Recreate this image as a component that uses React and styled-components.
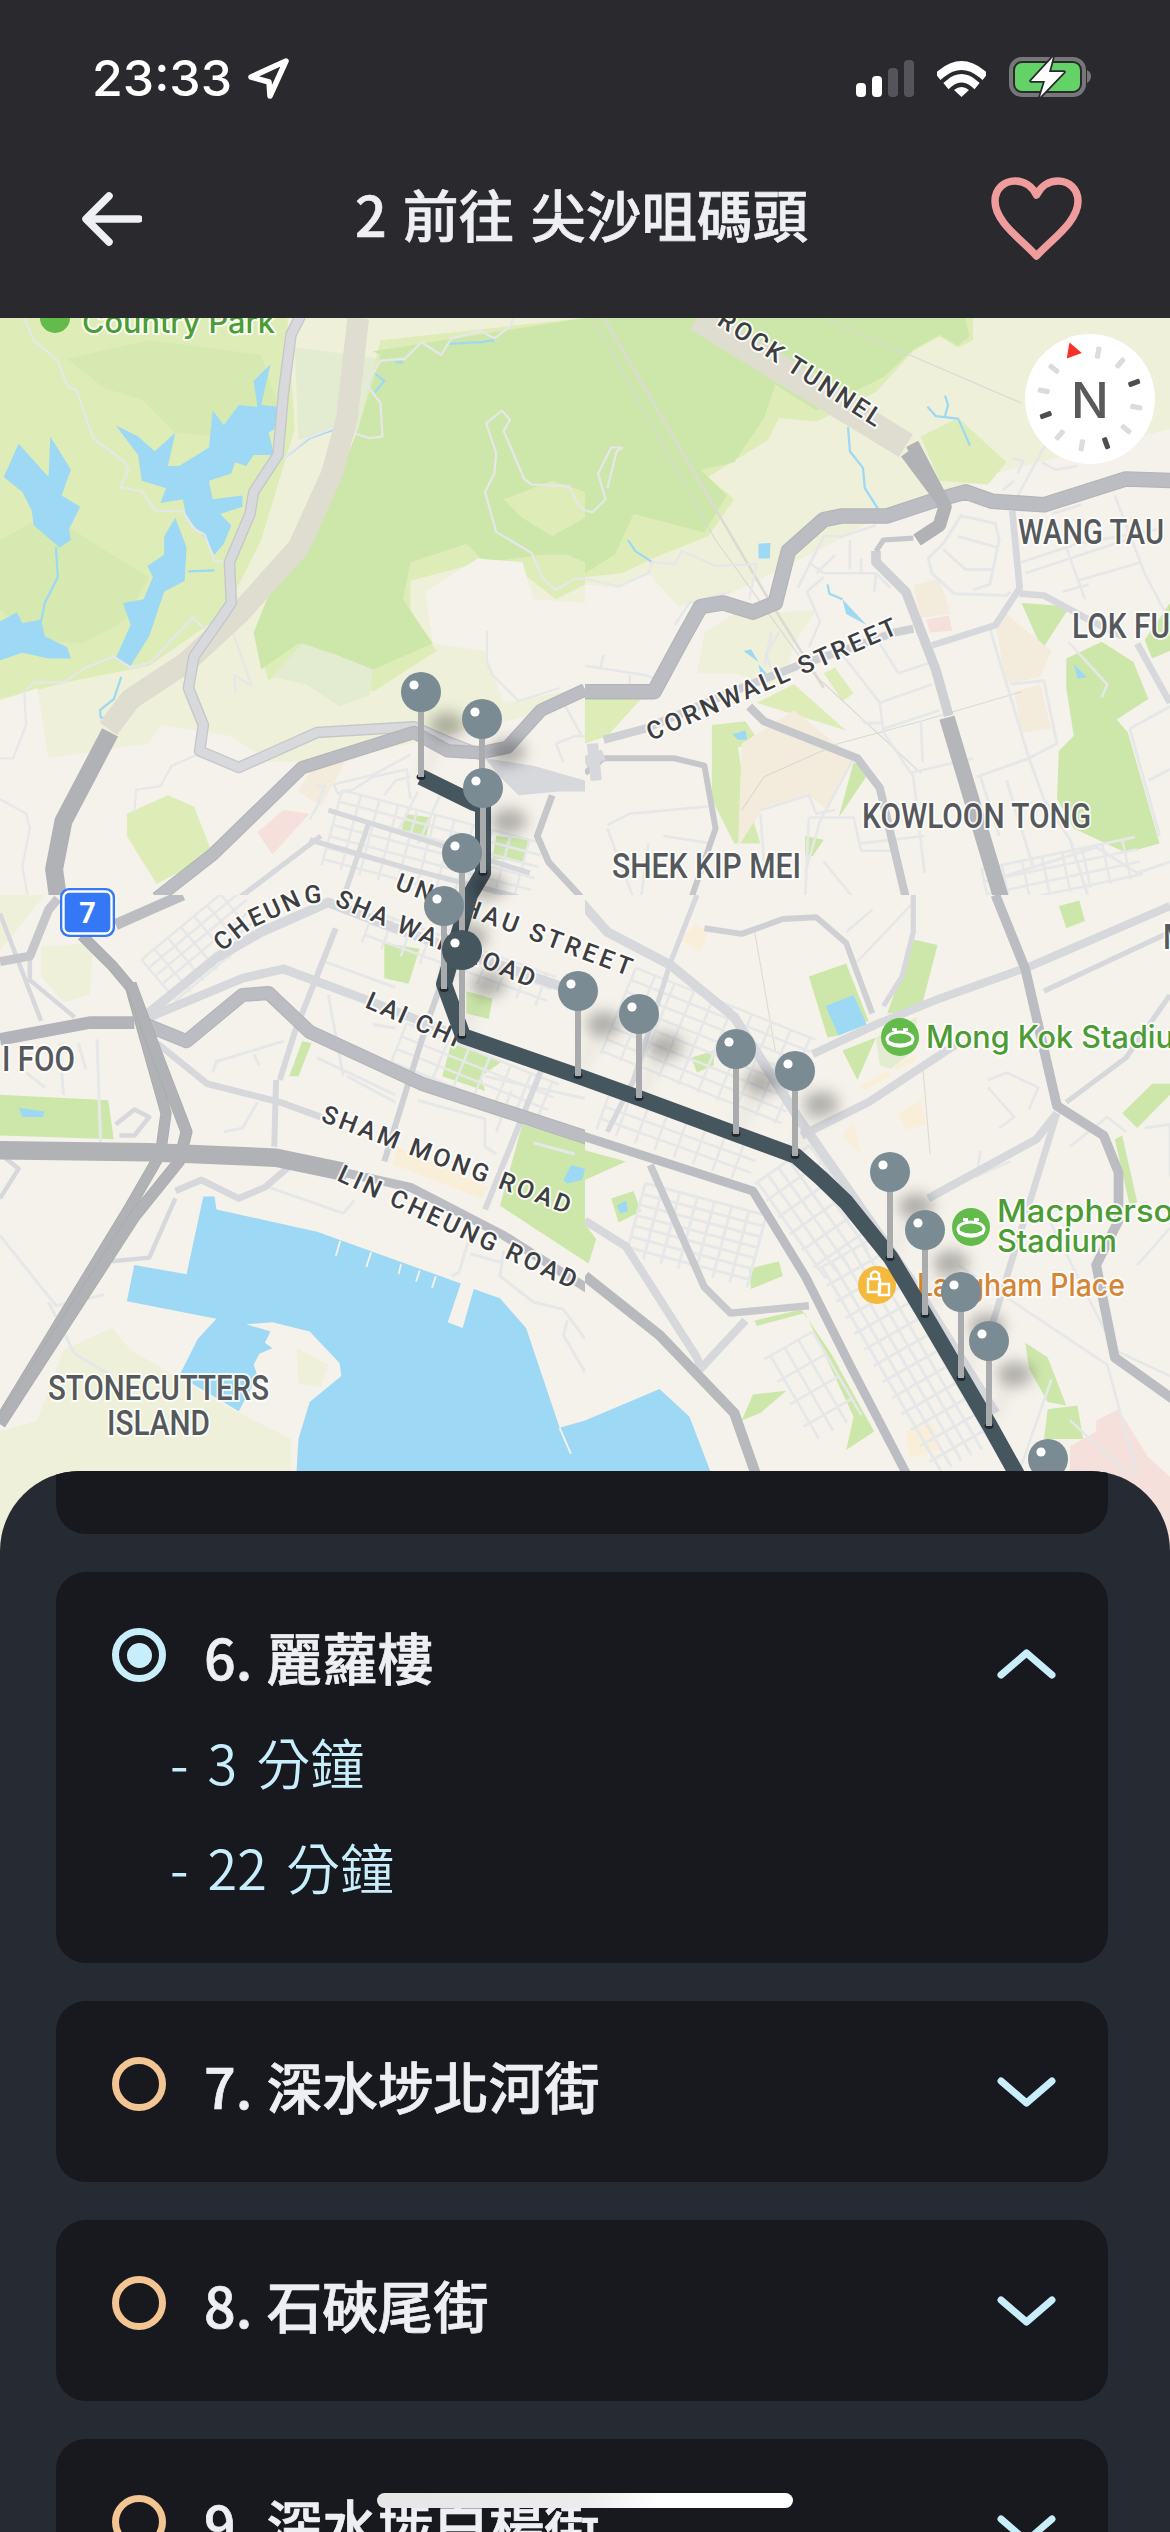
import React from 'react';
import styled, { createGlobalStyle } from 'styled-components';

const GlobalStyle = createGlobalStyle`
  html, body { margin: 0; padding: 0; background: #29292e; }
`;

const cjk = `'Noto Sans CJK TC', 'Noto Sans', sans-serif`;

const Screen = styled.div`
  position: relative;
  display: flex;
  flex-direction: column;
  width: 1170px;
  height: 2532px;
  overflow: hidden;
  background: #262a33;
  font-family: ${cjk};
`;

const Header = styled.header`
  height: 318px;
  flex: none;
  background: #29292e;
`;

const StatusBar = styled.div`
  height: 156px;
  display: flex;
  align-items: center;
  justify-content: space-between;
  padding: 0 79px 0 92px;
  box-sizing: border-box;
`;

const TimeGroup = styled.div`
  display: flex;
  align-items: center;
  gap: 16px;
  color: #fff;
  font-family: Inter, sans-serif;
  font-weight: 500;
  font-size: 50px;
  line-height: 1;
`;

const StatusIcons = styled.div`
  display: flex;
  align-items: center;
  gap: 23px;
`;

const Signal = styled.div`
  display: flex;
  align-items: flex-end;
  gap: 6px;
  height: 37px;
`;

const SignalBar = styled.span`
  width: 10px;
  height: ${(p) => p.$h}px;
  border-radius: 4px;
  background: ${(p) => (p.$on ? '#fff' : '#54545a')};
`;

const NavBar = styled.div`
  height: 126px;
  display: grid;
  grid-template-columns: 1fr auto 1fr;
  align-items: center;
  padding: 0 88px 0 81px;
`;

const Title = styled.h1`
  margin: -10px 0 0;
  color: #eeeff2;
  font-size: 55.5px;
  font-weight: 500;
  -webkit-text-stroke: 0.7px #eeeff2;
  line-height: 1;
  word-spacing: 4px;
`;

const HeartSlot = styled.div`
  display: flex;
  justify-content: flex-end;
`;

const MapArea = styled.div`
  position: relative;
  flex: none;
  height: 1233px;
  background: #f5f2eb;
`;

const MapSvg = styled.svg`
  display: block;
  width: 1170px;
  height: 1233px;
`;

const MapLabel = styled.text`
  font-family: ${(p) => p.$font || 'Roboto'}, sans-serif;
  font-size: ${(p) => p.$size || 30}px;
  font-weight: ${(p) => p.$weight || 500};
  fill: ${(p) => p.$color || '#55595c'};
  stroke: rgba(255, 255, 255, 0.85);
  stroke-width: 4px;
  paint-order: stroke;
  stroke-linejoin: round;
`;

const Compass = styled.svg`
  position: absolute;
  top: 16px;
  right: 15px;
  width: 130px;
  height: 130px;
`;

const Sheet = styled.section`
  flex: 1;
  margin-top: -80px;
  position: relative;
  background: #262a33;
  border-radius: 80px 80px 0 0;
  overflow: hidden;
`;

const CardList = styled.div`
  display: flex;
  flex-direction: column;
  gap: 38px;
  margin-top: -118px;
  padding: 0 62px 0 56px;
`;

const Card = styled.div`
  flex: none;
  min-height: 181px;
  box-sizing: border-box;
  padding: 54px 52px ${(p) => (p.$open ? '44px' : '0')} 56px;
  background: #17191f;
  border-radius: 30px;
`;

const CardRow = styled.div`
  display: flex;
  align-items: center;
  height: 58px;
`;

const Radio = styled.span`
  flex: none;
  width: 54px;
  height: 54px;
  box-sizing: border-box;
  display: flex;
  align-items: center;
  justify-content: center;
  border-radius: 50%;
  border: 7px solid ${(p) => (p.$active ? '#c8edfb' : '#f3c592')};
  &::after {
    content: '';
    display: ${(p) => (p.$active ? 'block' : 'none')};
    width: 25px;
    height: 25px;
    border-radius: 50%;
    background: #c8edfb;
  }
`;

const StopName = styled.div`
  flex: 1;
  margin-left: 38px;
  padding-top: 2px;
  color: #eeeff2;
  font-size: 55.5px;
  font-weight: 500;
  -webkit-text-stroke: 0.7px #eeeff2;
  line-height: 58px;
  white-space: nowrap;
  word-spacing: 2px;
`;

const Chevron = styled.svg`
  flex: none;
  width: 59px;
  height: 31px;
  margin-top: 16px;
`;

const Duration = styled.div`
  margin: ${(p) => (p.$first ? '25px' : '0')} 0 0 58px;
  color: #c8edfb;
  font-size: 54px;
  font-weight: 350;
  line-height: 105px;
  height: 105px;
  word-spacing: 7px;
`;

const HomeBar = styled.div`
  position: absolute;
  left: 377px;
  top: 2493px;
  width: 416px;
  height: 15px;
  border-radius: 8px;
  background: linear-gradient(90deg, #e6e6e6 0%, #ececec 50%, #fff 68%);
`;

// short names for the map palette
const C = {
  rural: '#eef0d9', land: '#f5f2eb', pale: '#deecb8', green: '#cde7ab', soft2: '#d5e9b1', water: '#9dd8f4',
  pink: '#f6e0dc', peach: '#f3ecdc', sand: '#f9efd9', tunnel: '#dfddd0',
  high: '#b1b2b6', major: '#bcbdc2', mid: '#cfd0d4', soft: '#d7d8dc', minor: '#e6e7e8', power: '#dcdbd2',
};

// parallel street lines for a rotated block of the city
const grid = (cx, cy, w, h, deg, step) => {
  const a = (deg * Math.PI) / 180;
  const pt = (u, v) => `${(cx + u * Math.cos(a) - v * Math.sin(a)).toFixed(0)},${(cy + u * Math.sin(a) + v * Math.cos(a)).toFixed(0)}`;
  let d = '';
  for (let v = -h / 2; v <= h / 2; v += step * 0.62) d += `M${pt(-w / 2, v)}L${pt(w / 2, v)}`;
  for (let u = -w / 2; u <= w / 2; u += step) d += `M${pt(u, -h / 2)}L${pt(u, h / 2)}`;
  return d;
};

const TILES = [
  {
    x: 0, y: 318,
    fills: [
      [C.rural, 'M0,0H1600V1600H0Z'],
      [C.pale, 'M0,0L770,0L790,300L700,600L600,800L400,940L200,980L0,1030Z'],
      [C.soft2, 'M180,110L400,60L700,100L745,240L700,330L470,310L380,220L280,190Z'],
      [C.soft2, 'M0,600L130,530L300,640L400,700L330,820L220,880L120,870L0,790Z'],
      ['#e3ecd0', 'M790,80L1020,110L1020,320L900,300L800,330Z'],
      [C.pale, 'M1020,60L1568,0V720L1490,760L1400,690L1300,700L1250,670L1100,710L1100,800L1170,900L1000,1010L900,950L820,900L720,980L680,850L760,650L880,500L960,300Z'],
      [C.green, 'M1000,90L1568,0V660L1520,640L1450,640L1380,650L1300,660L1250,610L1100,660L1080,760L1160,880L1000,950L900,910L800,880L700,950L680,850L760,650L880,500L960,300L1020,100Z'],
      [C.pale, 'M1350,490L1480,440L1568,470V540L1480,590L1400,540Z'],
      [C.land, 'M1280,650L1400,660L1430,760L1568,770V1000L1350,1040L1300,900L1160,880L1140,740Z'],
      ['#e3ecd0', 'M730,970L810,880L900,910L1000,950L990,1020L910,1050L820,990Z'],
      [C.land, 'M0,1035L100,1000L130,1190L400,1150L430,1100L620,1130L720,1200L830,1200L560,1450L400,1600H0Z'],
      [C.pale, 'M340,1340L450,1290L520,1320L570,1450L420,1530L340,1400Z'],
      [C.land, 'M1568,1010L1400,1080L1100,1150L820,1210L560,1450L420,1600H1600Z'],
      ['#f3ecdc', 'M840,1210L930,1190L860,1320L800,1280Z'],
      [C.pink, 'M690,1390L760,1330L830,1340L730,1450Z'],
      [C.green, 'M1085,1340L1155,1350L1140,1415L1075,1395Z'],
      [C.green, 'M1330,1400L1420,1410L1400,1470L1320,1460Z'],
      [C.water, 'M310,290L370,320L415,360L470,310L450,400L480,400L560,350L570,250L600,290L640,235L690,240L680,170L725,125L700,235L745,240L735,300L720,310L735,370L680,370L660,400L630,390L620,420L560,440L570,490L650,480L650,510L590,530L620,560L600,610L575,640L545,590L500,540L490,490L430,500L445,460L380,440L370,370Z'],
      [C.water, 'M470,540L500,620L495,710L440,740L400,860L350,940L310,920L350,830L330,770L385,760L410,700L395,670L440,640L440,590Z'],
      [C.water, 'M50,340L130,430L135,320L190,410L165,480L215,510L185,570L190,600L160,620L125,590L90,560L85,520L60,470L10,430Z'],
      [C.water, 'M0,820L45,795L60,825L110,815L120,860L180,890L190,920L130,920L60,905L0,925Z'],
    ],
    lines: [
      [C.water, 6, 'M150,620L155,700L120,770L110,820M505,685L575,682M325,970L305,1030L268,1060L270,1080L295,1082M760,380L830,325L900,300M1005,150L1030,170L1005,200M1060,120L1080,120M1200,70L1290,65L1325,60'],
      [C.minor, 6, 'M65,0L90,60L155,115L180,185L205,195L250,325L335,390L345,410L322,458L380,468L418,522L490,522L520,570L548,585L575,655L605,660L610,740'],
      [C.minor, 6, 'M610,810L675,995L628,965L632,1015M0,1190L35,1190L70,1100L65,1010L90,985L170,985L230,945L305,915L350,945L405,930L515,810L555,845'],
      [C.minor, 6, 'M760,380L825,325L900,295L990,325L1025,320L1020,230L982,180L1020,115L1085,110L1130,65L1182,100L1210,55L1290,35L1325,55L1370,20L1375,0'],
      [C.minor, 6, 'M1345,250L1303,285L1330,365L1325,420L1300,470L1330,578L1425,635L1455,705L1490,735L1540,705L1568,705M1345,250L1367,275L1350,305L1405,435L1425,450L1525,455L1550,505L1568,520'],
      [C.minor, 6, 'M530,1180L460,1210L430,1265L365,1275L360,1335M0,1300L70,1340L80,1380L60,1480L75,1568M1305,845L1305,930L1320,965L1390,1035L1500,1000'],
      [C.tunnel, 58, 'M960,0L930,270L890,420L800,620L640,800L500,930L350,1030L290,1110'],
      [C.minor, 7, grid(1160, 1450, 560, 210, 15, 52)],
      [C.minor, 7, 'M850,1265L870,1265L850,1320L830,1355M895,1260L1000,1235L1100,1180M895,1260L905,1285L945,1275L1000,1240L1090,1220L1100,1300M1030,1290L1060,1250L1100,1240M1180,1290L1120,1420M1120,1280L1065,1390M1510,1040L1560,1130M1490,1150L1540,1130L1568,1130M1490,1150L1510,1200'],
      [C.soft, 14, 'M880,1330L1420,1500M830,1410L1100,1490L1400,1568M990,1360L920,1568M640,1568L860,1400'],
      ['#c6c7cb', 18, 'M1480,1290L1440,1400L1470,1470L1560,1568'],
      ['#c5c6ca', 31, 'M805,-5L780,45L760,200L745,370L680,470L670,530L615,660L620,770L600,800L520,915L505,1000L545,1100L535,1170L640,1215L850,1120L1110,1105L1200,1145L1290,1180'],
      ['#d8d9dc', 24, 'M805,-5L780,45L760,200L745,370L680,470L670,530L615,660L620,770L600,800L520,915L505,1000L545,1100L535,1170L640,1215L850,1120L1110,1105L1200,1145L1290,1180'],
      ['#b3b4b9', 36, 'M420,1568L570,1450L810,1215L1110,1120L1200,1170L1290,1175L1360,1160L1450,1060L1568,1005'],
      [C.major, 30, 'M420,1568L570,1450L810,1215L1110,1120L1200,1170L1290,1175L1360,1160L1450,1060L1568,1005'],
      [C.high, 48, 'M295,1120L170,1360L145,1490L160,1600'],
    ],
    fillsAfter: [[C.soft, 'M1300,1190L1430,1210L1568,1250V1280L1500,1280L1390,1290L1340,1240Z']],
  },
  {
    x: 585, y: 318,
    fills: [
      [C.rural, 'M0,0H1600V1600H0Z'],
      [C.pale, 'M0,0L1040,0L1040,60L1000,80L950,50L880,90L780,200L620,280L520,270L490,330L330,430L400,490L330,590L180,650L100,690L0,700Z'],
      [C.green, 'M40,0L1020,0L1030,50L1000,75L950,45L880,85L800,160L620,250L510,180L480,270L400,390L310,410L380,480L320,580L130,530L80,640L0,690L0,0Z'],
      [C.land, 'M0,720L90,730L170,690L250,780L400,740L520,680L680,600L780,540L880,520L1100,420L1568,300V1600H0Z'],
      [C.rural, 'M300,960L320,850L400,800L620,790L560,880L530,1000L400,960Z'],
      [C.pale, 'M900,320L1000,270L1130,390L1080,450L950,440Z'],
      [C.green, 'M1290,920L1385,875L1470,930L1510,1030L1425,1085L1455,1120L1540,1420L1450,1445L1310,1380L1265,1300L1270,1170L1310,1130L1290,1000Z'],
      [C.green, 'M1170,770L1300,780L1225,895Z'],
      [C.green, 'M1500,870L1568,770V900L1520,920Z'],
      [C.soft2, 'M340,1100L430,1090L470,1150L410,1160L430,1290L470,1420L400,1420L340,1300Z'],
      [C.pale, 'M460,1040L560,990L700,1115Z'],
      [C.pale, 'M640,960L670,945L720,1015L690,1035Z'],
      [C.green, 'M680,1350L760,1230L720,1200Z'],
      [C.pale, 'M0,1030L150,1030L60,1130L0,1150Z'],
      [C.green, 'M590,1400L640,1410L610,1455L590,1450Z'],
      [C.peach, 'M420,1150L560,1060L720,1190L650,1330L600,1290L480,1320L410,1430Z'],
      [C.peach, 'M880,720L950,705L980,800L900,810Z'],
      [C.peach, 'M1100,830L1130,800L1250,900L1220,970L1130,990Z'],
      [C.peach, 'M1150,1010L1220,990L1250,1110L1170,1120Z'],
      [C.pink, 'M915,815L975,805L985,845L925,850Z'],
      [C.water, 'M465,610L497,608L495,650L465,650Z'],
      [C.water, 'M690,760L755,830L700,800Z'],
      [C.water, 'M425,900L445,895L465,930Z'],
      [C.water, 'M465,935L490,965L470,960Z'],
      [C.water, 'M395,1125L430,1115L435,1140L410,1140Z'],
      [C.water, 'M1310,935L1345,970L1320,975Z'],
    ],
    lines: [
      [C.water, 6, 'M705,295L710,360L745,405L750,460L785,515M650,720L655,745L690,760M918,240L940,265L1000,272L1032,345M965,210L973,235L965,265M115,600L135,630L180,660'],
      [C.power, 7, 'M50,0L480,740L640,1000'],
      ['#d9d9d5', 3, 'M20,0L350,600L600,950L900,1230M640,0L1170,230M680,1150L900,1090L1170,1010M420,1330L480,1240L680,1150'],
      [C.minor, 6, 'M60,460L85,360L100,350L70,350L35,420L55,490L20,525L0,520M0,705L90,725L170,690L180,660L240,665L260,630L350,670L460,665L440,760'],
      [C.tunnel, 72, 'M300,0L860,345'],
      [C.minor, 7, 'M1160,480L1230,350L1240,340M1120,465L1150,440M1145,380L1175,385L1160,420M1225,390L1260,410L1320,400'],
      [C.minor, 7, 'M780,560L690,590L640,590L570,730M710,600L710,680M600,660L640,690L780,690L820,730M670,640L620,690M740,650L740,690M780,690L775,740M640,700L595,740L630,820L600,890M520,850L485,910L500,950'],
      [C.minor, 8, 'M1010,530L960,610L920,650L930,690L990,745L1130,750L1140,740M1010,535L1100,555L1110,600L1085,720L1040,735M1000,590L1105,620M960,625L1020,680L1090,680'],
      [C.minor, 7, 'M1170,660L1320,610L1540,570M1290,620L1340,760M1180,690L1480,590M1320,710L1490,660M1280,740L1350,720M1420,480L1500,690L1568,820M1250,530L1330,505M1295,875L1400,990L1385,1025'],
      [C.minor, 7, 'M690,910L790,1040L800,1120L880,1240L910,1500M790,880L840,960L930,930M790,1040L930,990M800,1110L950,1060M740,1080L750,1095L800,1095M870,1230L1040,1190M900,1090L905,1200'],
      [C.minor, 8, 'M1085,840L1190,1190L1230,1300L1300,1410L1350,1568M1140,990L1230,980L1265,1150L1190,1190L1050,1240M1460,1110L1568,1050M1460,1110L1540,1400M1510,1250L1568,1220M1060,1240L1110,1400M1130,1250L1200,1480M1120,1510L1310,1450L1370,1430L1480,1500L1568,1470'],
      [C.minor, 7, 'M60,1370L120,1340L330,1320M60,1380L130,1568M210,1400L340,1420M170,1420L150,1568M600,1350L590,1568M470,1330L600,1290L620,1340L670,1330M470,1340L480,1470M720,1190L630,1360L590,1500M600,1350L720,1350L740,1440L820,1440M740,1420L910,1400'],
      [C.minor, 7, 'M1120,1510L1110,1568M640,1470L720,1568M0,940L160,965L190,975M50,910L40,950M120,965L120,1000M240,830L280,770L390,740M500,850L480,940'],
      [C.minor, 7, grid(1280, 1500, 420, 110, -12, 55)],
      ['#c6c7cb', 16, 'M0,1230L50,1190L240,1190L320,1210L350,1380L285,1568'],
      [C.mid, 22, 'M50,1140L160,1110L420,1000L570,940L830,850L880,840'],
      ['#c6c7cb', 22, 'M440,1050L480,1090L730,1190L790,1270L860,1568'],
      [C.soft, 18, 'M1145,520L1165,730L1100,830L930,885M1165,745L1230,750L1340,810L1440,860M1480,880L1568,1040'],
      [C.mid, 26, 'M780,630L780,660L860,740L940,950L975,1075'],
      ['#c6c7cb', 14, 'M780,630L800,600L880,595'],
      ['#b5b6ba', 42, 'M970,1080L1125,1600'],
      [C.soft, 30, 'M0,1200L50,1180M20,1150L30,1250'],
      ['#b3b4b9', 42, 'M-10,1010L185,1010L260,870L310,780L370,770L450,795L510,770L545,630L640,545L690,535L810,535L930,495L1020,470L1090,495L1230,505L1450,435L1600,440'],
      [C.major, 36, 'M-10,1010L185,1010L260,870L310,780L370,770L450,795L510,770L545,630L640,545L690,535L810,535L930,495L1020,470L1090,495L1230,505L1450,435L1600,440'],
      [C.high, 36, 'M877,340L950,480L965,510L950,560L890,600'],
      [C.high, 32, 'M860,365L960,500'],
    ],
  },
  {
    x: 0, y: 895,
    fills: [
      [C.land, 'M0,0H1600V1800H0Z'],
      [C.rural, 'M110,140L250,130L240,270L170,290L110,220Z'],
      [C.rural, 'M0,0L120,0L0,150Z'],
      [C.rural, 'M100,1420L170,1230L300,1170L350,1230L470,1300L640,1400L780,1470L780,1800H0V1450Z'],
      [C.rural, 'M795,1225L880,1270L860,1330L800,1320Z'],
      [C.green, 'M0,540L290,555L305,660L0,650Z'],
      [C.green, 'M1030,130L1125,145L1095,240L1030,225Z'],
      [C.green, 'M1250,260L1320,280L1310,335L1250,320Z'],
      [C.green, 'M775,490L810,395L835,400L800,490Z'],
      [C.green, 'M1210,400L1345,450L1290,490L1300,530L1185,490Z'],
      [C.green, 'M1340,840L1400,620L1568,670V990Z'],
      [C.sand, 'M1060,680L1310,790L1290,820L1055,730Z'],
      [C.water, 'M50,575L120,585L115,600L60,600Z'],
      [C.water, 'M1510,770L1530,730L1568,740L1560,770L1520,780Z'],
      [C.water, 'M545,815L575,815L580,850L850,910L1235,1050L1200,1155L1240,1170L1270,1065L1340,1090L1410,1170L1500,1440L1568,1420V1800H780L800,1470L830,1370L915,1300L910,1265L830,1180L730,1155L660,1160L725,1180L710,1210L730,1225L695,1240L680,1270L690,1300L640,1395L480,1300L530,1200L580,1145L340,1098L360,1000L500,1025Z'],
    ],
    lines: [
      [C.land, 5, 'M912,935L900,975M995,965L982,1005M1075,998L1068,1025M1125,1015L1115,1045M1168,1030L1158,1062M1500,1440L1530,1510'],
      [C.minor, 8, 'M0,920L150,1110L280,1080M130,1100L200,1240L300,1300M720,790L920,860L950,825M600,640L650,630L690,560M570,480L580,450L760,395M680,430L695,460M1260,920L1230,1020L1210,1030M1260,970L1350,995M1350,960L1340,1030L1430,1100L1510,1120L1568,1200M1520,1150L1510,1190L1568,1290'],
      [C.minor, 8, 'M870,180L1060,250M1000,350L1060,360M880,270L920,490M930,490L1060,560M1120,555L1300,605L1300,680L1330,700M1430,670L1540,700M850,440L1060,540M1300,490L1568,550M1370,530L1330,640M260,390L270,680M160,400L170,540M70,480L120,520M210,400L230,470'],
      [C.minor, 7, grid(550, 130, 320, 150, -40, 46)],
      [C.minor, 7, grid(1230, 175, 520, 90, 20, 55)],
      [C.minor, 7, grid(1270, 490, 440, 130, 22, 60)],
      [C.soft, 12, 'M310,620L360,580L400,600L360,650L320,650M0,700L50,740L0,820M300,990L400,980L470,820M80,170L80,230L200,330M0,50L110,340'],
      [C.soft, 18, 'M470,800L540,770L640,820L710,790L780,730M420,400L555,510L750,560L860,600'],
      [C.soft, 16, 'M750,500L790,370L900,90M740,500L735,680M1300,850L1400,600L1460,450'],
      [C.mid, 16, 'M1030,720L1140,360L1200,190'],
      [C.soft, 26, 'M385,330L580,170L700,100L880,20L1060,90L1568,270'],
      [C.soft, 24, 'M400,330L650,225L760,200L1000,290L1200,370'],
      ['#c6c7cb', 24, 'M0,180L80,165L130,40L155,10'],
      [C.major, 30, 'M310,80L400,40L490,0'],
      ['#b3b4b9', 38, 'M390,350L500,395L650,270L720,265L830,370L1130,510L1600,665'],
      [C.major, 32, 'M390,350L500,395L650,270L720,265L830,370L1130,510L1600,665'],
      [C.major, 24, 'M900,745L1100,790L1350,920L1600,1080'],
      ['#a9aaae', 30, 'M220,110L300,190L350,250L445,590L430,700L350,840L0,1420'],
      [C.high, 26, 'M220,110L300,190L350,250L445,590L430,700L350,840L0,1420'],
      ['#a9aaae', 32, 'M350,240L420,430L500,640L480,720L360,870L0,1430'],
      [C.high, 28, 'M350,240L420,430L500,640L480,720L360,870L0,1430'],
      ['#b3b4b9', 34, 'M0,390L240,345L360,345'],
      [C.high, 50, 'M-10,690L400,695L740,710L930,750'],
    ],
  },
  {
    x: 585, y: 895,
    fills: [
      [C.land, 'M0,0H1600V1800H0Z'],
      [C.green, 'M600,220L700,185L760,340L680,380L650,385Z'],
      [C.water, 'M645,300L720,270L755,350L680,380Z'],
      [C.green, 'M810,320L880,120L945,135L900,310Z'],
      [C.green, 'M690,420L780,385L730,500Z'],
      ['#e3ecd0', 'M780,385L890,330L880,420L820,470L790,460Z'],
      [C.green, 'M285,440L345,420L345,460L300,480Z'],
      [C.green, 'M1270,30L1325,15L1340,70L1290,90Z'],
      [C.green, 'M0,690L110,720L0,770Z'],
      [C.green, 'M70,820L130,800L150,855L90,885Z'],
      [C.water, 'M85,840L110,825L115,855L95,860Z'],
      [C.green, 'M0,890L30,930L10,995L0,990Z'],
      [C.green, 'M440,1010L520,990L530,1030L445,1065Z'],
      [C.green, 'M455,1150L580,1120L660,1240L775,1450L700,1500L720,1410L590,1130L460,1165Z'],
      [C.green, 'M1180,1210L1240,1250L1290,1380L1240,1370L1190,1280Z'],
      [C.green, 'M1240,1390L1320,1380L1335,1470L1230,1470Z'],
      [C.green, 'M420,1420L450,1350L540,1340L470,1400Z'],
      [C.green, 'M1440,590L1520,510L1568,510V540L1480,630Z'],
      [C.green, 'M1420,660L1440,650L1480,830L1460,840Z'],
      [C.pink, 'M1300,1490L1370,1450L1370,1420L1430,1390L1510,1520L1600,1600V1800H1300Z'],
      [C.sand, 'M255,120L295,80L330,95L310,155Z'],
      [C.sand, 'M840,590L900,555L915,620L860,635Z'],
      [C.sand, 'M740,515L810,475L820,490L745,530Z'],
      [C.sand, 'M830,460L890,430L885,450L830,475Z'],
      [C.sand, 'M690,650L720,610L740,700Z'],
      [C.sand, 'M860,1450L935,1425L950,1500L870,1520Z'],
      [C.water, 'M0,1420L200,1335L280,1410L340,1568L0,1568Z'],
    ],
    lines: [
      ['#dcdbd2', 3, 'M455,100L510,420M905,460L925,700'],
      [C.minor, 7, grid(330, 410, 520, 250, 22, 56)],
      [C.minor, 7, grid(250, 660, 430, 100, 20, 55)],
      [C.minor, 8, grid(870, 1240, 640, 200, 60, 50)],
      [C.minor, 8, grid(620, 860, 320, 180, 55, 55)],
      [C.minor, 8, grid(300, 920, 340, 200, 15, 48)],
      [C.minor, 7, grid(610, 1330, 260, 150, 60, 70)],
      [C.minor, 7, 'M1060,690L1050,760L1140,720M1080,520L1150,600L1110,630M1080,500L1130,480L1215,520L1190,580M700,100L770,40M730,180L880,20M1230,850L1420,1230L1568,1300M1480,1000L1568,900M1300,680L1400,600L1450,640M1500,630L1568,620L1568,760M1000,1000L1400,1270L1480,1568M1300,1420L1460,1568M1250,1310L1160,1568'],
      [C.soft, 14, 'M300,0L230,180L130,500L60,640M880,0L880,100L850,220L800,300M1290,560L1450,440L1568,270M1230,260L1568,100'],
      [C.soft, 22, 'M610,430L780,350L950,280L1200,190L1568,30M920,820L1210,660L1265,590M0,880L110,950L300,1250L310,1280L430,1150M580,650L760,560L1000,400'],
      [C.soft, 18, 'M1265,590L1140,1000L1080,1200'],
      [C.soft, 26, 'M-10,20L60,100L230,190L400,330L570,600L880,1050L1100,1400'],
      [C.mid, 16, 'M320,90L420,105L530,65L620,60L700,130L770,320'],
      ['#c8c9cd', 20, 'M175,730L320,1060L390,1130L600,1110'],
      [C.major, 26, 'M1100,0L1180,200L1265,570L1390,650L1430,750L1430,880L1370,1000L1420,1250L1600,1380'],
      [C.major, 24, 'M-10,650L450,800L590,1030L720,1290L880,1600'],
      ['#b8b9bd', 28, 'M0,1030L200,1190L400,1400L470,1600'],
    ],
  },
];

const ROUTE = 'M421,777L474,803L483,806L483,873L470,895L444,984L463,1036L578,1076L639,1098L736,1134L796,1156Q822,1178 846,1202Q870,1232 891,1258L925,1315L962,1378L990,1426L1020,1480';

const PINS = [
  { x: 421, y: 692, tip: 777 },
  { x: 482, y: 719, tip: 804 },
  { x: 483, y: 788, tip: 873 },
  { x: 462, y: 853, tip: 938 },
  { x: 444, y: 906, tip: 989 },
  { x: 462, y: 950, tip: 1036, current: true },
  { x: 578, y: 991, tip: 1076 },
  { x: 639, y: 1014, tip: 1098 },
  { x: 736, y: 1049, tip: 1134 },
  { x: 795, y: 1071, tip: 1156 },
  { x: 890, y: 1172, tip: 1258 },
  { x: 925, y: 1230, tip: 1315 },
  { x: 961, y: 1292, tip: 1378 },
  { x: 989, y: 1341, tip: 1426 },
  { x: 1048, y: 1459, tip: 1545 },
];

const Tile = ({ tile, index }) => (
  <g clipPath={`url(#tile-${index})`}>
    <g transform={`translate(${tile.x},${tile.y}) scale(0.3731,0.37)`}>
      {tile.fills.map(([color, d], i) => <path key={i} d={d} fill={color} />)}
      {tile.lines.map(([color, w, d], i) => (
        <path key={i} d={d} fill="none" stroke={color} strokeWidth={w} strokeLinejoin="round" />
      ))}
      {(tile.fillsAfter || []).map(([color, d], i) => <path key={i} d={d} fill={color} />)}
    </g>
  </g>
);

const Angled = ({ x, y, deg, len, children, ...rest }) => (
  <MapLabel x={x} y={y} transform={`rotate(${deg} ${x} ${y})`} textLength={len} lengthAdjust="spacing" $size={25} $color="#3c3e41" {...rest}>
    {children}
  </MapLabel>
);

const Place = ({ x, y, len, children, ...rest }) => (
  <MapLabel x={x} y={y} textLength={len} lengthAdjust="spacingAndGlyphs" $size={35} $weight={500} {...rest}>
    {children}
  </MapLabel>
);

const StadiumIcon = ({ x, y }) => (
  <g transform={`translate(${x},${y})`}>
    <circle r="19" fill="#62bb4a" />
    <ellipse cy="2" rx="13" ry="7" fill="none" stroke="#fff" strokeWidth="3" />
    <path d="M-13,3V7Q0,14 13,7V3Q0,10 -13,3Z" fill="#fff" />
    <path d="M-8,-9H-3V-6H-8ZM3,-9H8V-6H3Z" fill="#fff" />
  </g>
);

const Map = () => (
  <MapSvg viewBox="0 318 1170 1233">
    <defs>
      <clipPath id="tile-0"><rect x="0" y="318" width="585.5" height="578" /></clipPath>
      <clipPath id="tile-1"><rect x="585" y="318" width="585" height="578" /></clipPath>
      <clipPath id="tile-2"><rect x="0" y="895" width="585.5" height="660" /></clipPath>
      <clipPath id="tile-3"><rect x="585" y="895" width="585" height="660" /></clipPath>
      <filter id="soft" x="-60%" y="-60%" width="220%" height="220%"><feGaussianBlur stdDeviation="7" /></filter>
    </defs>
    {TILES.map((t, i) => <Tile key={i} tile={t} index={i} />)}

    <circle cx="55" cy="318" r="15" fill="#62bb4a" />
    <Place x={82} y={333} len={193} $size={30} $color="#4a9c33" $font="Inter">Country Park</Place>

    <Angled x={716} y={324} deg={33} len={190}>ROCK TUNNEL</Angled>
    <Angled x={651} y={741} deg={-23.5} len={270}>CORNWALL STREET</Angled>
    <Angled x={394} y={889} deg={20.4} len={250}>UN CHAU STREET</Angled>
    <path id="cheung-sha-wan" d="M222,952L252,928L300,906Q325,898 345,910L560,1000" fill="none" />
    <MapLabel $size={25} $color="#3c3e41" letterSpacing="2.8">
      <textPath href="#cheung-sha-wan">CHEUNG SHA WAN ROAD</textPath>
    </MapLabel>
    <Angled x={364} y={1007} deg={23.8} len={100}>LAI CHI</Angled>
    <Angled x={320} y={1121} deg={20.6} len={264}>SHAM MONG ROAD</Angled>
    <Angled x={336} y={1180} deg={24.8} len={260}>LIN CHEUNG ROAD</Angled>

    <Place x={1018} y={544} len={146}>WANG TAU</Place>
    <Place x={1072} y={638} len={98}>LOK FU</Place>
    <Place x={862} y={828} len={229}>KOWLOON TONG</Place>
    <Place x={612} y={878} len={189}>SHEK KIP MEI</Place>
    <Place x={1163} y={949} len={26}>M</Place>
    <Place x={2} y={1071} len={73}>I FOO</Place>
    <Place x={48} y={1400} len={221}>STONECUTTERS</Place>
    <Place x={107} y={1435} len={103}>ISLAND</Place>

    <StadiumIcon x={900} y={1037} />
    <Place x={926} y={1048} len={275} $font="Inter" $size={31} $color="#4a9c33">Mong Kok Stadium</Place>
    <StadiumIcon x={971} y={1227} />
    <Place x={997} y={1222} len={196} $font="Inter" $size={31} $color="#4a9c33">Macpherson</Place>
    <Place x={997} y={1252} len={120} $font="Inter" $size={31} $color="#4a9c33">Stadium</Place>
    <circle cx="877" cy="1285" r="19" fill="#f5b93c" />
    <path d="M868,1279H880V1292H868ZM879,1284H889V1295H879ZM871,1279V1274Q875,1269 879,1274V1279" fill="none" stroke="#fff" strokeWidth="2.4" />
    <Place x={917} y={1296} len={208} $font="Inter" $size={31} $color="#d58634">Langham Place</Place>

    <rect x="60" y="888" width="55" height="49" rx="9" fill="#3478f6" />
    <rect x="63.5" y="891.5" width="48" height="42" rx="6" fill="none" stroke="#fff" strokeWidth="2.4" />
    <MapLabel x={87.5} y={923} textAnchor="middle" $size={29} $weight={700} $color="#fff" style={{ stroke: 'none' }}>7</MapLabel>

    <path d={ROUTE} fill="none" stroke="#46565f" strokeWidth="16" strokeLinejoin="round" />

    <g filter="url(#soft)">
      {PINS.map((p, i) => (
        <g key={i}>
          <path d={`M${p.x},${p.tip}L${p.x + 24},${p.tip - 52}`} stroke="#000" strokeOpacity="0.06" strokeWidth="8" />
          <ellipse cx={p.x + 26} cy={p.tip - 52} rx="18" ry="13" fill="#000" fillOpacity="0.26" />
        </g>
      ))}
    </g>
    {PINS.map((p, i) => (
      <g key={i}>
        <ellipse cx={p.x} cy={p.tip} rx="4.5" ry="3" fill="#1f2a30" />
        <rect x={p.x - 3} y={p.y + 15} width="6" height={p.tip - p.y - 15} fill="#a9abac" />
        <circle cx={p.x} cy={p.y} r="20" fill={p.current ? '#46565f' : '#7b8b94'} />
        <circle cx={p.x - 7} cy={p.y - 7} r="4.6" fill="#fff" />
      </g>
    ))}
  </MapSvg>
);

const COMPASS_ANGLES = Array.from({ length: 12 }, (_, i) => i * 30 - 20);

const CompassDial = () => (
  <Compass viewBox="-65 -65 130 130">
    <circle r="65" fill="#fff" />
    {COMPASS_ANGLES.map((a, i) => (i === 0 ? (
      <path key={a} transform={`rotate(${a})`} d="M0,-60L8,-46H-8Z" fill="#f8302a" />
    ) : (
      <rect key={a} transform={`rotate(${a})`} x="-2.6" y="-53" width="5.2" height="12" rx="1.5" fill={i % 3 === 0 ? '#4e4e4e' : '#dcdcdc'} />
    )))}
    <text x="0" y="19" textAnchor="middle" fontFamily="Inter, sans-serif" fontWeight="500" fontSize="50" fill="#5a5a5a">N</text>
  </Compass>
);

const ChevronIcon = ({ up }) => (
  <Chevron viewBox="0 0 59 31">
    <path d={up ? 'M4,27L29.5,5L55,27' : 'M4,4L29.5,26L55,4'} fill="none" stroke="#c8edfb" strokeWidth="7" strokeLinecap="round" strokeLinejoin="round" />
  </Chevron>
);

const StopCard = ({ name, active, open, times = [] }) => (
  <Card $open={open}>
    <CardRow>
      <Radio $active={active} />
      <StopName>{name}</StopName>
      <ChevronIcon up={open} />
    </CardRow>
    {times.map((t, i) => <Duration key={t} $first={i === 0}>- {t} 分鐘</Duration>)}
  </Card>
);

export default function App() {
  return (
    <Screen>
      <GlobalStyle />
      <Header>
        <StatusBar>
          <TimeGroup>
            23:33
            <svg width="42" height="42" viewBox="0 0 42 42">
              <path d="M38,4L3,20L21,25L22,39Z" fill="none" stroke="#fff" strokeWidth="5.5" strokeLinejoin="round" />
            </svg>
          </TimeGroup>
          <StatusIcons>
            <Signal>
              <SignalBar $h={14} $on />
              <SignalBar $h={21} $on />
              <SignalBar $h={29} />
              <SignalBar $h={37} />
            </Signal>
            <svg width="49" height="37" viewBox="0 0 49 37">
              <path d="M4,14Q24.5,-3 45,14" fill="none" stroke="#fff" strokeWidth="8.5" strokeLinecap="square" />
              <path d="M12,23.5Q24.5,13 37,23.5" fill="none" stroke="#fff" strokeWidth="8" strokeLinecap="square" />
              <path d="M17,30Q24.5,24 32,30L24.5,37Z" fill="#fff" />
            </svg>
            <svg width="82" height="42" viewBox="0 0 82 42" style={{ marginTop: -2 }}>
              <rect x="2" y="3" width="73" height="36" rx="11" fill="none" stroke="#77777a" strokeWidth="4" />
              <rect x="6" y="7" width="65" height="28" rx="7" fill="#63d267" />
              <path d="M78,14Q82,16 82,20Q82,25 78,27Z" fill="#77777a" />
              <path d="M44,1L22,25H36L31,41L55,16H40Z" fill="#fff" stroke="#29292e" strokeWidth="3.5" strokeLinejoin="round" paintOrder="stroke" />
            </svg>
          </StatusIcons>
        </StatusBar>
        <NavBar>
          <svg width="61" height="56" viewBox="0 0 61 56">
            <path d="M58,28H6M28,5L5,28L28,51" fill="none" stroke="#eef0f3" strokeWidth="7.5" strokeLinecap="round" strokeLinejoin="round" />
          </svg>
          <Title>2 前往 尖沙咀碼頭</Title>
          <HeartSlot>
            <svg width="91" height="84" viewBox="0 0 91 84">
              <path d="M45.5,79C30,62 4,45 4,24C4,12 13,4 24,4C33,4 41,9 45.5,18C50,9 58,4 67,4C78,4 87,12 87,24C87,45 61,62 45.5,79Z" fill="none" stroke="#ef9d9c" strokeWidth="7.5" strokeLinejoin="round" />
            </svg>
          </HeartSlot>
        </NavBar>
      </Header>
      <MapArea>
        <Map />
        <CompassDial />
      </MapArea>
      <Sheet>
        <CardList>
          <Card />
          <StopCard name="6. 麗蘿樓" active open times={[3, 22]} />
          <StopCard name="7. 深水埗北河街" />
          <StopCard name="8. 石硤尾街" />
          <StopCard name="9. 深水埗白楊街" />
        </CardList>
      </Sheet>
      <HomeBar />
    </Screen>
  );
}
